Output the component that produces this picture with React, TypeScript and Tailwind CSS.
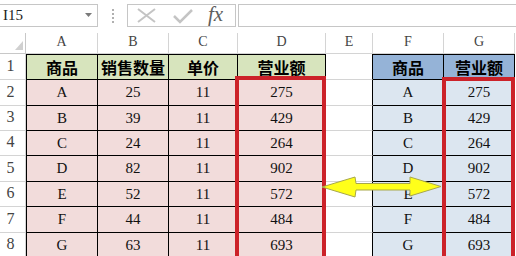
import React from "react";

const monoCls = "font-['Liberation_Serif','Times_New_Roman',serif]";
const cjkCls = "font-['Noto_Sans_CJK_SC','Noto_Sans',sans-serif]";

const data = [
  ["A", "25", "11", "275"],
  ["B", "39", "11", "429"],
  ["C", "24", "11", "264"],
  ["D", "82", "11", "902"],
  ["E", "52", "11", "572"],
  ["F", "44", "11", "484"],
  ["G", "63", "11", "693"],
];
const rowH = ["h-[26px]", "h-[25px]", "h-[25px]", "h-[26px]", "h-[25px]", "h-[26px]", "h-[25px]"];

function RowNum({ n, h }: { n: number; h: string }) {
  return (
    <div
      className={`${h} w-[26px] shrink-0 flex items-end justify-center pr-[4px] pb-[1px] border-r border-b border-[#d4d4d4] text-[16px] font-normal text-[#444] bg-white font-['Liberation_Serif',serif]`}
    >
      {n}
    </div>
  );
}

function Cell({ children, className = "", h }: { children?: React.ReactNode; className?: string; h: string }) {
  return (
    <div className={`${h} shrink-0 flex items-center justify-center border-r border-b ${className}`}>
      {children}
    </div>
  );
}

export default function App() {
  return (
    <div className="relative w-[516px] h-[256px] overflow-hidden bg-white text-black">
      {/* Toolbar */}
      <div className="h-[33px] pt-[4px] flex items-start">
        <div className="relative w-[98px] h-[23px] border-y border-r border-[#c6c6c6] flex items-center pl-[3px]">
          <span className="text-[15px] text-[#222] font-['Liberation_Serif',serif]">I15</span>
          <svg className="absolute left-[85px] top-[8px]" width="7" height="4" viewBox="0 0 7 4">
            <polygon points="0,0 7,0 3.5,4" fill="#7a7a7a" />
          </svg>
        </div>
        <div className="w-[29px] h-[23px] flex flex-col items-center justify-center gap-[2px]">
          <div className="w-[2px] h-[2px] bg-[#b0b0b0]" />
          <div className="w-[2px] h-[2px] bg-[#b0b0b0]" />
          <div className="w-[2px] h-[2px] bg-[#b0b0b0]" />
          <div className="w-[2px] h-[2px] bg-[#b0b0b0]" />
        </div>
        <div className="w-[109px] h-[23px] border border-[#c6c6c6] flex items-center">
          <svg width="80" height="21" viewBox="0 0 80 21" className="shrink-0">
            <path d="M10 4 L27 17 M10 17 L27 4" stroke="#c4c4c4" strokeWidth="2" fill="none" />
            <path d="M46 11 L52 17 L64 5" stroke="#c4c4c4" strokeWidth="2.5" fill="none" />
          </svg>
          <span className="italic text-[21px] leading-none text-[#5e5e5e] -mt-[3px] font-['Liberation_Serif','DejaVu_Serif',serif]">
            fx
          </span>
        </div>
        <div className="ml-[2px] flex-1 h-[23px] border-y border-l border-[#c6c6c6]" />
      </div>

      {/* Column headers */}
      <div className={`flex h-[21px] text-[14px] text-[#444] ${monoCls}`}>
        <div className="relative w-[26px] shrink-0 border-r border-b border-[#c8c8c8]">
          <svg className="absolute left-[15px] top-[8px]" width="8" height="9" viewBox="0 0 8 9">
            <polygon points="8,0 8,9 0,9" fill="#d0d0d0" />
          </svg>
        </div>
        {[
          ["A", "w-[72px]"],
          ["B", "w-[71px]"],
          ["C", "w-[69px]"],
          ["D", "w-[88px]"],
          ["E", "w-[47px]"],
          ["F", "w-[71px]"],
          ["G", "w-[71px]"],
        ].map(([l, w]) => (
          <div key={l} className={`${w} shrink-0 flex items-end justify-center pb-[1px] border-r border-b border-[#d4d4d4]`}>
            {l}
          </div>
        ))}
      </div>

      {/* Row 1 headers */}
      <div className={`flex text-[16px] font-bold ${cjkCls}`}>
        <RowNum n={1} h="h-[26px]" />
        <Cell h="h-[26px]" className="w-[72px] border-l border-t border-black bg-[#d7e4bd]">商品</Cell>
        <Cell h="h-[26px]" className="w-[71px] border-t border-black bg-[#d7e4bd]">销售数量</Cell>
        <Cell h="h-[26px]" className="w-[69px] border-t border-black bg-[#d7e4bd]">单价</Cell>
        <Cell h="h-[26px]" className="w-[88px] border-t border-black bg-[#d7e4bd]">营业额</Cell>
        <Cell h="h-[26px]" className="w-[47px] border-b-[#d4d4d4] border-r-black bg-white" />
        <Cell h="h-[26px]" className="w-[71px] border-t border-black bg-[#95b3d7]">商品</Cell>
        <Cell h="h-[26px]" className="w-[71px] border-t border-black bg-[#95b3d7]">营业额</Cell>
      </div>

      {/* Data rows */}
      {data.map((r, i) => (
        <div key={i} className={`flex text-[15px] text-[#111] ${monoCls}`}>
          <RowNum n={i + 2} h={rowH[i]} />
          <Cell h={rowH[i]} className="w-[72px] border-l border-black bg-[#f2dcdb]">{r[0]}</Cell>
          <Cell h={rowH[i]} className="w-[71px] border-black bg-[#f2dcdb]">{r[1]}</Cell>
          <Cell h={rowH[i]} className="w-[69px] border-black bg-[#f2dcdb]">{r[2]}</Cell>
          <Cell h={rowH[i]} className="w-[88px] border-black bg-[#f2dcdb]">{r[3]}</Cell>
          <Cell h={rowH[i]} className="w-[47px] border-b-[#d4d4d4] border-r-black bg-white" />
          <Cell h={rowH[i]} className="w-[71px] border-black bg-[#dce6f0]">{r[0]}</Cell>
          <Cell h={rowH[i]} className="w-[71px] border-black bg-[#dce6f0]">{r[3]}</Cell>
        </div>
      ))}

      {/* Red highlight boxes */}
      <div className="absolute left-[235px] top-[76px] w-[91px] h-[200px] border-[4px] border-[#cc2229]" />
      <div className="absolute left-[442px] top-[77px] w-[73px] h-[200px] border-[4px] border-[#cc2229]" />

      {/* Yellow double arrow */}
      <svg className="absolute left-0 top-0" width="516" height="256" viewBox="0 0 516 256">
        <polygon
          points="322,187 355,177 356,183.5 410,183.5 410,177 441,186.5 410,196 410,190 356,190 355,197"
          fill="#ffff1a"
          stroke="#a7a74a"
          strokeWidth="1"
          strokeLinejoin="round"
        />
      </svg>
    </div>
  );
}
